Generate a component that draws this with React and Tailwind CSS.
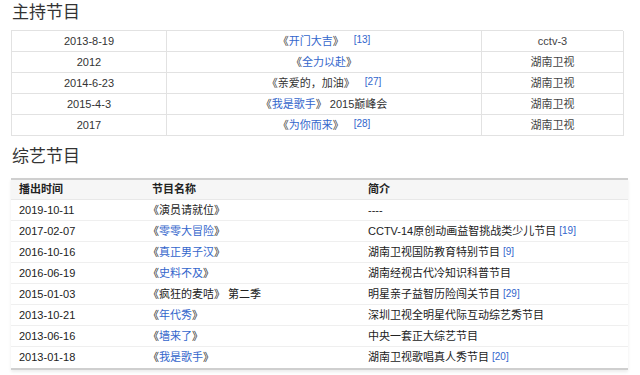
import React from 'react';

const font = { fontFamily: '"Liberation Sans", "Noto Sans CJK SC", sans-serif' };

const hosted = [
  { date: '2013-8-19', name: '开门大吉', link: true, ref: '13', ch: 'cctv-3' },
  { date: '2012', name: '全力以赴', link: true, ch: '湖南卫视' },
  { date: '2014-6-23', name: '亲爱的，加油', link: false, ref: '27', ch: '湖南卫视' },
  { date: '2015-4-3', name: '我是歌手', link: true, after: ' 2015巅峰会', ch: '湖南卫视' },
  { date: '2017', name: '为你而来', link: true, ref: '28', ch: '湖南卫视' },
];

const variety = [
  { date: '2019-10-11', name: '演员请就位', link: false, desc: '----' },
  { date: '2017-02-07', name: '零零大冒险', link: true, desc: 'CCTV-14原创动画益智挑战类少儿节目', ref: '19' },
  { date: '2016-10-16', name: '真正男子汉', link: true, desc: '湖南卫视国防教育特别节目', ref: '9' },
  { date: '2016-06-19', name: '史料不及', link: true, desc: '湖南经视古代冷知识科普节目' },
  { date: '2015-01-03', name: '疯狂的麦咭', link: false, after: ' 第二季', desc: '明星亲子益智历险闯关节目', ref: '29' },
  { date: '2013-10-21', name: '年代秀', link: true, desc: '深圳卫视全明星代际互动综艺秀节目' },
  { date: '2013-06-16', name: '墙来了', link: true, desc: '中央一套正大综艺节目' },
  { date: '2013-01-18', name: '我是歌手', link: true, desc: '湖南卫视歌唱真人秀节目', ref: '20' },
];

function Title({ name, link, after }) {
  return (
    <span>
      《<span className={link ? 'text-[#3366cc]' : ''}>{name}</span>》{after}
    </span>
  );
}

function Ref({ n, gap }) {
  return <sup className={`text-[10px] text-[#3366cc] ${gap ? 'ml-[10px]' : 'ml-[3px]'} relative -top-[1px]`}>[{n}]</sup>;
}

export default function App() {
  return (
    <div className="w-[640px] h-[375px] bg-white text-[#333] text-[11px] px-[11px] overflow-hidden" style={font}>
      <div className="h-[30px] flex items-center text-[17px] text-[#333] pl-[1px] pb-[4px]">主持节目</div>
      <div className="w-[612px] border-t border-l border-[#e2e2e2]">
        {hosted.map((r) => (
          <div key={r.date} className="grid grid-cols-[155px_315px_142px] h-[21px]">
            <div className="border-r border-b border-[#e2e2e2] flex items-center justify-center">{r.date}</div>
            <div className="border-r border-b border-[#e2e2e2] flex items-center justify-center">
              <Title {...r} />
              {r.ref && <Ref n={r.ref} gap />}
            </div>
            <div className="border-r border-b border-[#e2e2e2] flex items-center justify-center text-[#444]">{r.ch}</div>
          </div>
        ))}
      </div>
      <div className="h-[42px] flex items-center text-[17px] text-[#333] pl-[1px]">综艺节目</div>
      <div className="w-[617px] border-t-2 border-b-2 border-[#cfcfcf] shadow-[0_2px_3px_rgba(0,0,0,0.08)]">
        <div className="grid grid-cols-[133px_216px_268px] h-[20px] bg-[#f6f6f6] border-b border-[#e8e8e8] font-bold text-[#222] items-center">
          <div className="pl-[8px]">播出时间</div>
          <div className="pl-[8px]">节目名称</div>
          <div className="pl-[8px]">简介</div>
        </div>
        {variety.map((r, i) => (
          <div
            key={r.date}
            className={`grid grid-cols-[133px_216px_268px] h-[21px] items-center text-[#222] ${i < variety.length - 1 ? 'border-b border-[#efefef]' : ''}`}
          >
            <div className="pl-[8px]">{r.date}</div>
            <div className="pl-[4px]">
              <Title {...r} />
            </div>
            <div className="pl-[8px]">
              {r.desc}
              {r.ref && <Ref n={r.ref} />}
            </div>
          </div>
        ))}
      </div>
    </div>
  );
}
